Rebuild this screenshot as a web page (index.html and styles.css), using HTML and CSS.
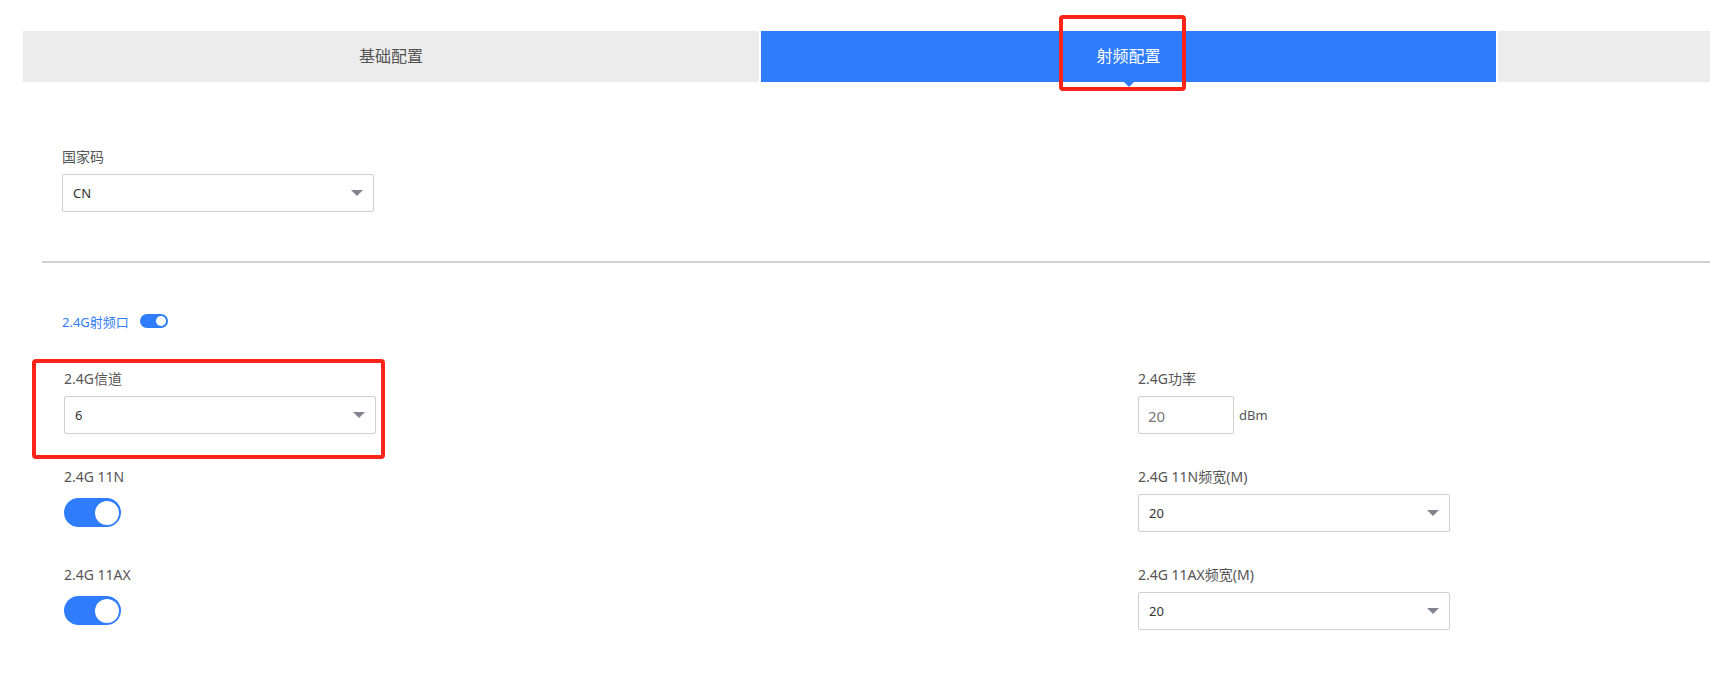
FILE: index.html
```html
<!DOCTYPE html>
<html lang="zh-CN">
<head>
    <meta charset="UTF-8">
    <title>射频配置</title>
    <link rel="stylesheet" href="styles.css">
</head>
<body>
    <nav class="tabs">
        <div class="tab">基础配置</div>
        <div class="tab tab-active">射频配置</div>
        <div class="tab"></div>
    </nav>

    <section class="country">
        <label class="field-label">国家码</label>
        <div class="select select-country">
            <span>CN</span>
            <i class="select-arrow"></i>
        </div>
    </section>

    <hr class="divider">

    <div class="radio-head">
        <span class="radio-title">2.4G射频口</span>
        <span class="switch switch-small"><i></i></span>
    </div>

    <section class="radio-grid">
        <div class="field">
            <label class="field-label">2.4G信道</label>
            <div class="select">
                <span>6</span>
                <i class="select-arrow"></i>
            </div>
        </div>
        <div class="field">
            <label class="field-label">2.4G功率</label>
            <div class="power-row">
                <div class="text-input">20</div>
                <span class="unit">dBm</span>
            </div>
        </div>

        <div class="field">
            <label class="field-label">2.4G 11N</label>
            <span class="switch"><i></i></span>
        </div>
        <div class="field">
            <label class="field-label">2.4G 11N频宽(M)</label>
            <div class="select">
                <span>20</span>
                <i class="select-arrow"></i>
            </div>
        </div>

        <div class="field">
            <label class="field-label">2.4G 11AX</label>
            <span class="switch"><i></i></span>
        </div>
        <div class="field">
            <label class="field-label">2.4G 11AX频宽(M)</label>
            <div class="select">
                <span>20</span>
                <i class="select-arrow"></i>
            </div>
        </div>
    </section>

    <!-- annotation marks from the screenshot -->
    <div class="mark mark-tab"></div>
    <div class="mark mark-channel"></div>
</body>
</html>
```

FILE: styles.css
```css
:root {
    --blue: #2f7dfc;
    --tab-bg: #ececec;
    --border: #cfcfcf;
    --label: #555;
    --text: #333;
    --mark: #fb2418;
}

* {
    margin: 0;
    padding: 0;
    box-sizing: border-box;
}

body {
    font-family: "Noto Sans", "Noto Sans CJK SC", sans-serif;
    color: var(--text);
    background: #fff;
    overflow: hidden;
    position: relative;
    min-height: 673px;
}

/* tabs */
.tabs {
    display: grid;
    grid-template-columns: 736px 735px 1fr;
    gap: 2px;
    margin: 31px 0 0 23px;
}

.tab {
    height: 51px;
    line-height: 51px;
    text-align: center;
    font-size: 16px;
    color: var(--label);
    background: var(--tab-bg);
    position: relative;
}

.tab-active {
    background: var(--blue);
    color: #fff;
}

.tab-active::after {
    content: "";
    position: absolute;
    left: 50%;
    bottom: -5px;
    margin-left: -5px;
    border-left: 5px solid transparent;
    border-right: 5px solid transparent;
    border-top: 5px solid var(--blue);
}

/* fields */
.field-label {
    display: block;
    font-size: 14px;
    line-height: 18px;
    color: var(--label);
}

.country {
    padding-left: 62px;
    margin-top: 66px;
}

.country .select {
    margin-top: 8px;
}

.select {
    width: 312px;
    height: 38px;
    border: 1px solid var(--border);
    border-radius: 2px;
    display: flex;
    align-items: center;
    justify-content: space-between;
    padding: 0 10px;
    font-size: 13px;
    color: var(--text);
    background: #fff;
}

.select-arrow {
    width: 0;
    height: 0;
    border-left: 6px solid transparent;
    border-right: 6px solid transparent;
    border-top: 6px solid #80848e;
}

.divider {
    border: none;
    height: 2px;
    background: #d2d2d2;
    margin: 49px 0 0 42px;
}

.radio-head {
    display: flex;
    align-items: center;
    gap: 11px;
    padding-left: 62px;
    margin-top: 51px;
    height: 14px;
}

.radio-title {
    font-size: 13px;
    color: var(--blue);
}

/* switch */
.switch {
    display: flex;
    justify-content: flex-end;
    align-items: center;
    width: 57px;
    height: 29px;
    border-radius: 15px;
    background: var(--blue);
    padding: 0 2px;
    margin-top: 12px;
}

.switch i {
    width: 24px;
    height: 24px;
    border-radius: 50%;
    background: #fff;
}

.switch-small {
    width: 28px;
    height: 14px;
    border-radius: 7px;
    margin-top: 0;
}

.switch-small i {
    width: 10px;
    height: 10px;
}

.radio-grid {
    display: grid;
    grid-template-columns: 1074px 1fr;
    row-gap: 34px;
    align-items: start;
    padding-left: 64px;
    margin-top: 42px;
}

.field .select,
.power-row {
    margin-top: 8px;
}

.power-row {
    display: flex;
    align-items: center;
    gap: 5px;
}

.text-input {
    width: 96px;
    height: 38px;
    border: 1px solid var(--border);
    border-radius: 2px;
    padding: 0 9px;
    line-height: 38px;
    font-size: 15px;
    color: #777;
}

.unit {
    font-size: 13px;
    color: var(--label);
}

/* red marks */
.mark {
    position: absolute;
    border: 4px solid var(--mark);
    border-radius: 4px;
}

.mark-tab {
    left: 1059px;
    top: 15px;
    width: 127px;
    height: 76px;
}

.mark-channel {
    left: 32px;
    top: 359px;
    width: 353px;
    height: 100px;
}
```
